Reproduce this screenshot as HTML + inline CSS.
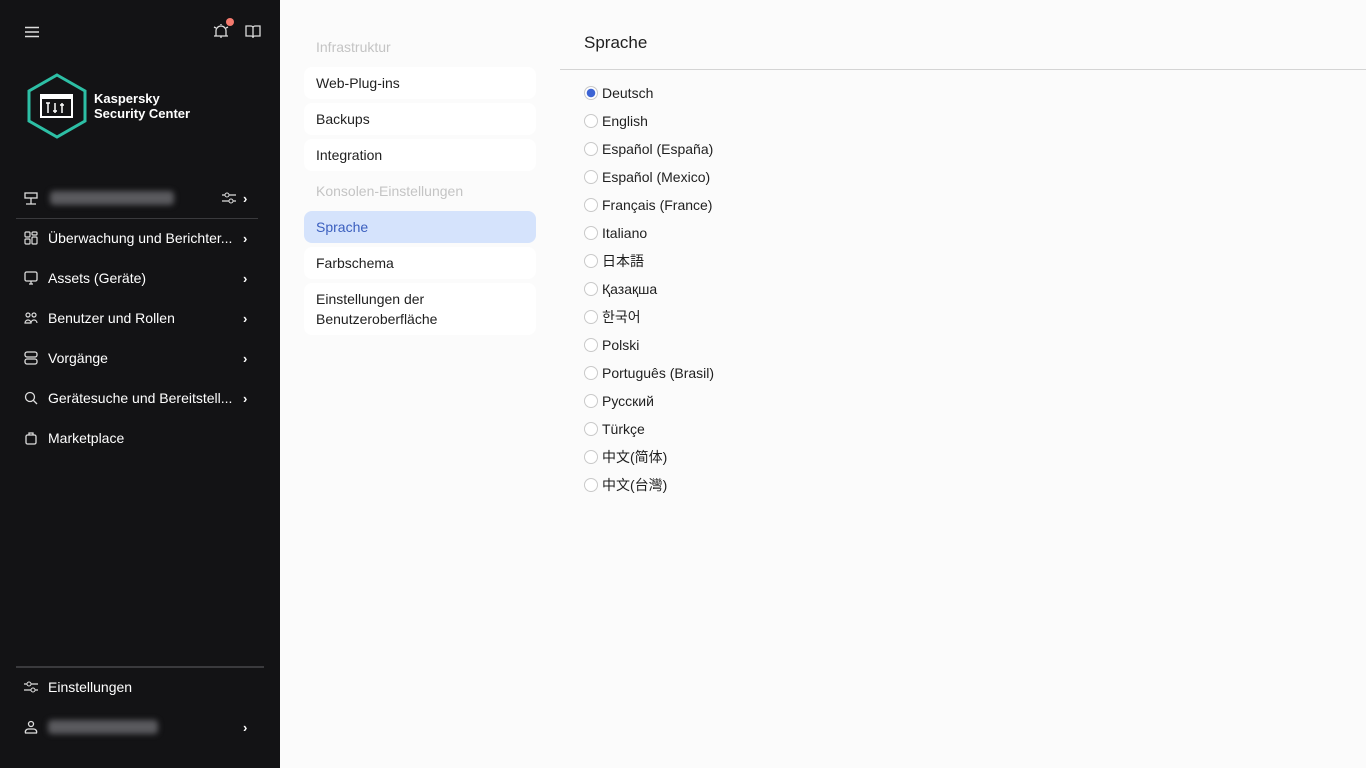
<!DOCTYPE html>
<html><head><meta charset="utf-8"><style>
*{box-sizing:border-box;margin:0;padding:0}
body{width:1366px;height:768px;background:#fbfbfb;font-family:"Liberation Sans","Noto Sans CJK JP",sans-serif;font-size:14px;color:#1f1f1f;position:relative;overflow:hidden}
.sb{position:absolute;left:0;top:0;width:280px;height:768px;background:#131315;color:#fff}
.ic{position:absolute}
.nav{position:absolute;left:16px;width:248px;height:40px;display:flex;align-items:center;font-size:14px;color:#fff}
.nav svg.i{position:absolute;left:8px}
.nav span{position:absolute;left:32px}
.nav .ch{position:absolute;left:227px;font-weight:bold;font-size:13px}
.blur{position:absolute;height:14px;background:#5a5a5e;filter:blur(3px);border-radius:4px}
.mid{position:absolute;left:304px;width:232px;height:32px;border-radius:8px;background:#fff;padding-left:12px;line-height:32px;font-size:14px;color:#1f1f1f}
.hd{position:absolute;left:316px;color:#c4c4c4;font-size:14px}
.r{position:absolute;left:584px;height:20px;display:flex;align-items:center;font-size:14px}
.r i{display:inline-block;width:14px;height:14px;border:1px solid #c9c9c9;border-radius:50%;margin-right:4px;background:#fff}
</style></head><body>
<div class="sb">
<svg class="ic" style="left:25px;top:26px" width="14" height="12"><path d="M0 1.5H14M0 6H14M0 10.5H14" stroke="#ddd" stroke-width="1.5"/></svg>
<svg class="ic" style="left:213px;top:23px" width="17" height="16"><path d="M3 13V8a5 5 0 0 1 10 0v5M1 13H15M8 13v2M1 4l2 1M15 4l-2 1M8 1v1" stroke="#ddd" stroke-width="1.3" fill="none"/></svg>
<div class="ic" style="left:226px;top:18px;width:8px;height:8px;border-radius:50%;background:#f47a6e"></div>
<svg class="ic" style="left:245px;top:25px" width="16" height="13"><path d="M1 1h5a2 2 0 0 1 2 2v9a2 2 0 0 0-2-1H1zM15 1h-5a2 2 0 0 0-2 2v9a2 2 0 0 1 2-1h5z" stroke="#ddd" stroke-width="1.3" fill="none"/></svg>
<svg class="ic" style="left:26px;top:73px" width="62" height="66"><polygon points="31,2 59,18 59,48 31,64 3,48 3,18" fill="none" stroke="#2dbfa5" stroke-width="3"/><rect x="14" y="21" width="33" height="24" fill="#fff"/><rect x="16" y="26" width="29" height="17" fill="#131315"/><path d="M22 30v10M20 30h4M29 30v10M27 38h4M36 30v10M34 32h4" stroke="#fff" stroke-width="1.5"/></svg>
<div class="ic" style="left:94px;top:91px;font-weight:bold;font-size:13px;line-height:15px">Kaspersky<br>Security Center</div>
<div class="nav" style="top:178px"><svg class="i" width="14" height="14"><rect x="1" y="2" width="12" height="5" fill="none" stroke="#ddd" stroke-width="1.3"/><path d="M7 7v6M2 13h10" stroke="#ddd" stroke-width="1.3"/></svg><div class="blur" style="left:34px;width:124px"></div><svg style="position:absolute;left:206px" width="14" height="14"><path d="M0 4h14M0 10h14" stroke="#ddd" stroke-width="1.2"/><circle cx="5" cy="4" r="2" fill="#131315" stroke="#ddd"/><circle cx="9" cy="10" r="2" fill="#131315" stroke="#ddd"/></svg><b class="ch">›</b></div>
<div class="ic" style="left:16px;top:218px;width:242px;height:1px;background:#3a3a3d"></div>
<div class="nav" style="top:218px"><svg class="i" width="14" height="14" fill="none" stroke="#ddd" stroke-width="1.2"><rect x="1" y="1" width="5" height="5" rx="1"/><rect x="8" y="1" width="5" height="3" rx="1"/><rect x="1" y="8" width="5" height="5" rx="1"/><rect x="8" y="6" width="5" height="7" rx="1"/></svg><span>Überwachung und Berichter...</span><b class="ch">›</b></div>
<div class="nav" style="top:258px"><svg class="i" width="14" height="14" fill="none" stroke="#ddd" stroke-width="1.3"><rect x="1" y="1" width="12" height="9" rx="1.5"/><path d="M5 13h4M7 10v3"/></svg><span>Assets (Geräte)</span><b class="ch">›</b></div>
<div class="nav" style="top:298px"><svg class="i" width="14" height="14" fill="none" stroke="#ddd" stroke-width="1.2"><circle cx="4" cy="4" r="2"/><circle cx="10" cy="4" r="2"/><path d="M1 12a3 3 0 0 1 6 0zM7 12a3 3 0 0 1 6 0"/></svg><span>Benutzer und Rollen</span><b class="ch">›</b></div>
<div class="nav" style="top:338px"><svg class="i" width="14" height="14" fill="none" stroke="#ddd" stroke-width="1.3"><rect x="1" y="1" width="12" height="5" rx="2"/><rect x="1" y="8" width="12" height="5" rx="2"/></svg><span>Vorgänge</span><b class="ch">›</b></div>
<div class="nav" style="top:378px"><svg class="i" width="14" height="14" fill="none" stroke="#ddd" stroke-width="1.3"><circle cx="6" cy="6" r="4.5"/><path d="M9.5 9.5L13 13"/></svg><span>Gerätesuche und Bereitstell...</span><b class="ch">›</b></div>
<div class="nav" style="top:418px"><svg class="i" width="14" height="14" fill="none" stroke="#ddd" stroke-width="1.3"><rect x="2" y="4" width="10" height="9" rx="1.5"/><path d="M5 4V2h4v2"/></svg><span>Marketplace</span></div>
<div class="ic" style="left:16px;top:666px;width:248px;height:2px;background:#3a3a3d"></div>
<div class="nav" style="top:667px"><svg class="i" width="14" height="14"><path d="M0 4h14M0 10h14" stroke="#ddd" stroke-width="1.2"/><circle cx="5" cy="4" r="2" fill="#131315" stroke="#ddd"/><circle cx="9" cy="10" r="2" fill="#131315" stroke="#ddd"/></svg><span>Einstellungen</span></div>
<div class="nav" style="top:707px"><svg class="i" width="14" height="14" fill="none" stroke="#ddd" stroke-width="1.3"><circle cx="7" cy="4" r="2.5"/><path d="M1.5 13a3 3 0 0 1 3-4h5a3 3 0 0 1 3 4z"/></svg><div class="blur" style="left:32px;width:110px"></div><b class="ch">›</b></div>
</div>
<div class="hd" style="top:39px">Infrastruktur</div>
<div class="mid" style="top:67px">Web-Plug-ins</div>
<div class="mid" style="top:103px">Backups</div>
<div class="mid" style="top:139px">Integration</div>
<div class="hd" style="top:183px">Konsolen-Einstellungen</div>
<div class="mid" style="top:211px;background:#d5e3fc;color:#3b5fbf">Sprache</div>
<div class="mid" style="top:247px">Farbschema</div>
<div class="mid" style="top:283px;height:52px;line-height:20px;padding-top:6px">Einstellungen der<br>Benutzeroberfläche</div>
<div style="position:absolute;left:584px;top:33px;font-size:17px;color:#1f1f1f">Sprache</div>
<div style="position:absolute;left:560px;top:69px;width:806px;height:1px;background:#d4d4d4"></div>
<div class="r" style="top:83px"><i style="border-color:#c9c9c9;background:radial-gradient(circle,#3d64d4 4px,#fff 4.5px)"></i>Deutsch</div>
<div class="r" style="top:111px"><i></i>English</div>
<div class="r" style="top:139px"><i></i>Español (España)</div>
<div class="r" style="top:167px"><i></i>Español (Mexico)</div>
<div class="r" style="top:195px"><i></i>Français (France)</div>
<div class="r" style="top:223px"><i></i>Italiano</div>
<div class="r" style="top:251px"><i></i>日本語</div>
<div class="r" style="top:279px"><i></i>Қазақша</div>
<div class="r" style="top:307px"><i></i><span style="font-family:'Noto Sans CJK KR',sans-serif">한국어</span></div>
<div class="r" style="top:335px"><i></i>Polski</div>
<div class="r" style="top:363px"><i></i>Português (Brasil)</div>
<div class="r" style="top:391px"><i></i>Русский</div>
<div class="r" style="top:419px"><i></i>Türkçe</div>
<div class="r" style="top:447px"><i></i>中文(简体)</div>
<div class="r" style="top:475px"><i></i><span style="font-family:'Liberation Sans','Noto Sans CJK TC',sans-serif">中文(台灣)</span></div>
</body></html>
